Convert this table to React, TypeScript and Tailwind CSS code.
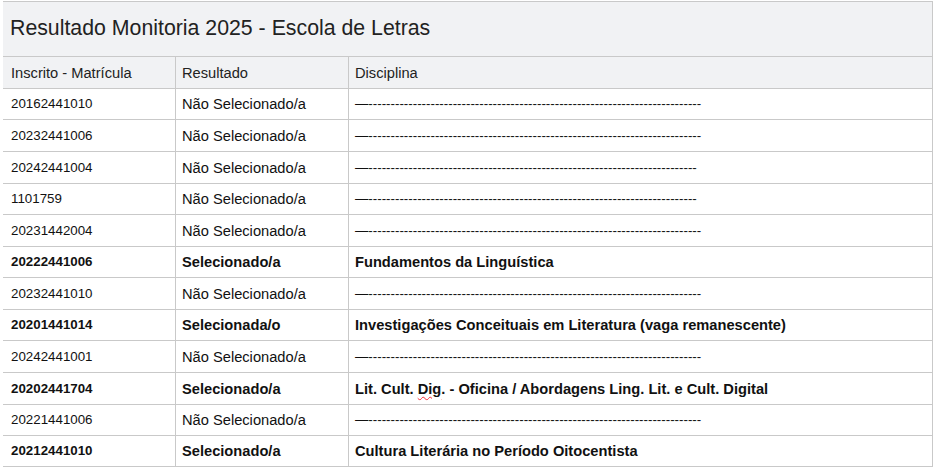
const DASH_LONG = '—' + '-'.repeat(75);
const DASH_SHORT = '—' + '-'.repeat(74);

type Row = {
  id: string;
  result: string;
  subject: React.ReactNode;
  selected?: boolean;
  h: string;
};

const rows: Row[] = [
  { id: '20162441010', result: 'Não Selecionado/a', subject: DASH_LONG, h: 'h-[31px]' },
  { id: '20232441006', result: 'Não Selecionado/a', subject: DASH_LONG, h: 'h-[32px]' },
  { id: '20242441004', result: 'Não Selecionado/a', subject: DASH_SHORT, h: 'h-[32px]' },
  { id: '1101759', result: 'Não Selecionado/a', subject: DASH_SHORT, h: 'h-[31px]' },
  { id: '20231442004', result: 'Não Selecionado/a', subject: DASH_LONG, h: 'h-[32px]' },
  { id: '20222441006', result: 'Selecionado/a', subject: 'Fundamentos da Linguística', selected: true, h: 'h-[31px]' },
  { id: '20232441010', result: 'Não Selecionado/a', subject: DASH_LONG, h: 'h-[32px]' },
  {
    id: '20201441014',
    result: 'Selecionada/o',
    subject: 'Investigações Conceituais em Literatura (vaga remanescente)',
    selected: true,
    h: 'h-[31px]',
  },
  { id: '20242441001', result: 'Não Selecionado/a', subject: DASH_LONG, h: 'h-[32px]' },
  {
    id: '20202441704',
    result: 'Selecionado/a',
    subject: (
      <>
        Lit. Cult.{' '}
        <span className="underline decoration-wavy decoration-red-500 decoration-1 underline-offset-2">Dig</span>. -
        Oficina / Abordagens Ling. Lit. e Cult. Digital
      </>
    ),
    selected: true,
    h: 'h-[32px]',
  },
  { id: '20221441006', result: 'Não Selecionado/a', subject: DASH_LONG, h: 'h-[31px]' },
  { id: '20212441010', result: 'Selecionado/a', subject: 'Cultura Literária no Período Oitocentista', selected: true, h: 'h-[31px]' },
];

export default function App() {
  return (
    <div className="h-[471px] w-[937px] bg-white pt-px pl-[3px] font-['Liberation_Sans',Arial,sans-serif] text-[#111]">
      <div className="w-[930px] border-r border-[#c9c9c9]">
        <div className="flex h-[56px] items-center border-y border-[#c9c9c9] bg-[#f1f2f4] px-[7px] text-[21.3px] text-[#222]">
          Resultado Monitoria 2025 - Escola de Letras
        </div>
        <div className="grid h-[32px] grid-cols-[172px_173px_1fr] border-b border-[#c9c9c9] bg-[#f1f2f4] text-[14.67px] text-[#222]">
          <div className="flex items-center px-[8px]">Inscrito - Matrícula</div>
          <div className="flex items-center border-l border-[#c9c9c9] px-[6px]">Resultado</div>
          <div className="flex items-center border-l border-[#c9c9c9] px-[6px]">Disciplina</div>
        </div>
        {rows.map((r) => (
          <div
            key={r.id + r.h + r.result + String(r.subject).slice(0, 4)}
            className={`grid ${r.h} grid-cols-[172px_173px_1fr] border-b border-[#c9c9c9] ${r.selected ? 'font-bold' : ''}`}
          >
            <div className="flex items-center px-[8px] text-[13.33px]">{r.id}</div>
            <div className="flex items-center border-l border-[#c9c9c9] px-[6px] text-[14.67px]">{r.result}</div>
            <div
              className={`flex items-center border-l border-[#c9c9c9] px-[6px] ${
                r.selected ? 'text-[14.67px]' : 'text-[13.33px]'
              }`}
            >
              <span className="whitespace-nowrap">{r.subject}</span>
            </div>
          </div>
        ))}
      </div>
    </div>
  );
}
